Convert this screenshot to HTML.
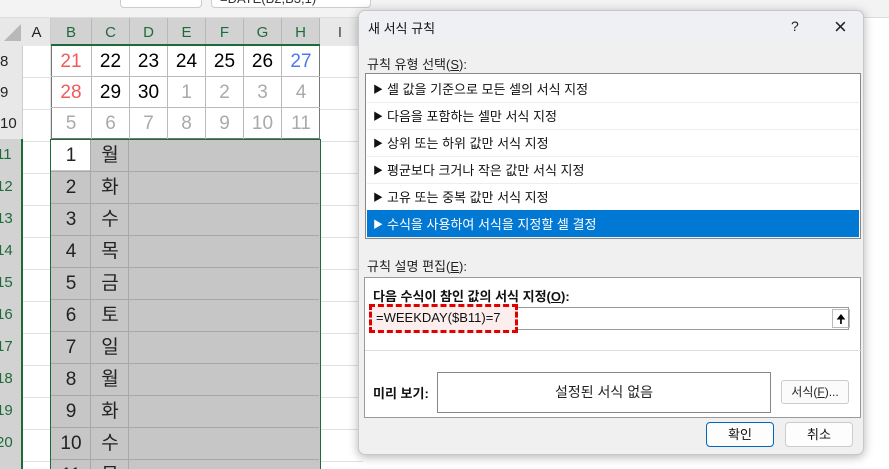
<!DOCTYPE html><html><head><meta charset="utf-8"><style>
html,body{margin:0;width:889px;height:469px;overflow:hidden}
body{background:#fff;font-family:"Liberation Sans","Noto Sans CJK KR",sans-serif;position:relative}
.a{position:absolute;box-sizing:border-box}
.c{position:absolute;box-sizing:border-box;display:flex;align-items:center;justify-content:center;font-size:19px}
.hd{background:#d2d2d2;color:#1e6b3a;font-size:15px;border-right:1px solid #b8b8b8}
.it{position:absolute;left:1px;right:1px;height:27px;font-size:13px;display:flex;align-items:center;padding-left:6px;border-bottom:1px solid #eee;color:#111}
.it b{font-size:10px;font-weight:normal;margin-right:4px}
</style></head><body>
<div class="a" style="left:0;top:0;width:889px;height:18px;background:#f3f3f3;border-bottom:1px solid #ddd"></div>
<div class="a" style="left:120px;top:-4px;width:82px;height:12px;background:#fff;border:1px solid #ccc;border-radius:4px"></div>
<div class="a" style="left:211px;top:-4px;width:160px;height:12px;background:#fff;border:1px solid #ccc;border-radius:4px;font-size:13px;line-height:4px;padding-left:8px;color:#333">=DATE(B2,B3,1)</div>
<div class="a" style="left:0;top:18px;width:23px;height:28px;background:#e8e8e8"></div>
<div class="a" style="left:4px;top:24px;width:0;height:0;border-left:17px solid transparent;border-bottom:17px solid #b8b8b8"></div>
<div class="c" style="left:23px;top:18px;width:28px;height:28px;background:#e8e8e8;font-size:15px;color:#222;border-right:1px solid #ccc">A</div>
<div class="c hd" style="left:51px;top:18px;width:41px;height:28px">B</div>
<div class="c hd" style="left:92px;top:18px;width:38px;height:28px">C</div>
<div class="c hd" style="left:130px;top:18px;width:38px;height:28px">D</div>
<div class="c hd" style="left:168px;top:18px;width:38px;height:28px">E</div>
<div class="c hd" style="left:206px;top:18px;width:38px;height:28px">F</div>
<div class="c hd" style="left:244px;top:18px;width:38px;height:28px">G</div>
<div class="c hd" style="left:282px;top:18px;width:38px;height:28px">H</div>
<div class="c" style="left:320px;top:18px;width:40px;height:28px;background:#e8e8e8;font-size:15px;color:#444">I</div>
<div class="a" style="left:51px;top:44px;width:269px;height:2px;background:#1e6b3a"></div>
<div class="a" style="left:0;top:46px;width:23px;height:423px;background:#e8e8e8;border-right:1px solid #ccc"></div>
<div class="a" style="left:-4px;top:139px;width:25px;font-size:15px;color:#1e6b3a;line-height:32px;background:#d2d2d2;height:330px;padding-left:4px;text-indent:-4px">
<div>11</div><div>12</div><div>13</div><div>14</div><div>15</div><div>16</div><div>17</div><div>18</div><div>19</div><div>20</div></div>
<div class="a" style="left:21px;top:139px;width:2px;height:330px;background:#1e6b3a"></div>
<div class="a" style="left:0;top:46px;width:23px;font-size:15px;color:#222;line-height:31px">
<div>8</div><div>9</div><div>10</div></div>
<div class="a" style="left:23px;top:46px;width:340px;height:423px;background:repeating-linear-gradient(to bottom,transparent 0 31px,#e1e1e1 31px 32px)"></div>
<div class="a" style="left:50px;top:46px;width:1px;height:423px;background:#e1e1e1"></div>
<div class="a" style="left:51px;top:46px;width:269px;height:93px;background:#fff;border:1.5px solid #777;border-top:none"></div>
<div class="a" style="left:51px;top:46px;width:269px;height:93px;display:grid;grid-template-columns:41px repeat(6,38px);grid-template-rows:31px 31px 31px;font-size:19px;text-align:center;line-height:31px">
<div style="color:#f05a5a;border-right:1px solid #bbb;border-bottom:1px solid #bbb">21</div><div style="border-right:1px solid #bbb;border-bottom:1px solid #bbb">22</div><div style="border-right:1px solid #bbb;border-bottom:1px solid #bbb">23</div><div style="border-right:1px solid #bbb;border-bottom:1px solid #bbb">24</div><div style="border-right:1px solid #bbb;border-bottom:1px solid #bbb">25</div><div style="border-right:1px solid #bbb;border-bottom:1px solid #bbb">26</div><div style="color:#4a78f0;border-bottom:1px solid #bbb">27</div>
<div style="color:#f05a5a;border-right:1px solid #bbb;border-bottom:1px solid #bbb">28</div><div style="border-right:1px solid #bbb;border-bottom:1px solid #bbb">29</div><div style="border-right:1px solid #bbb;border-bottom:1px solid #bbb">30</div><div style="color:#aaa;border-right:1px solid #bbb;border-bottom:1px solid #bbb">1</div><div style="color:#aaa;border-right:1px solid #bbb;border-bottom:1px solid #bbb">2</div><div style="color:#aaa;border-right:1px solid #bbb;border-bottom:1px solid #bbb">3</div><div style="color:#aaa;border-bottom:1px solid #bbb">4</div>
<div style="color:#aaa;border-right:1px solid #bbb">5</div><div style="color:#aaa;border-right:1px solid #bbb">6</div><div style="color:#aaa;border-right:1px solid #bbb">7</div><div style="color:#aaa;border-right:1px solid #bbb">8</div><div style="color:#aaa;border-right:1px solid #bbb">9</div><div style="color:#aaa;border-right:1px solid #bbb">10</div><div style="color:#aaa">11</div>
</div>
<div class="a" style="left:50px;top:139px;width:271px;height:330px;background:#c6c6c6;border:1.5px solid #1e6b3a;border-bottom:none;overflow:hidden">
<div class="a" style="left:0;top:0;width:40px;height:30px;background:#fff"></div>
<div class="a" style="left:0;top:0;width:268px;height:330px;background:repeating-linear-gradient(to bottom,transparent 0 31px,#a8a8a8 31px 32px)"></div>
<div class="a" style="left:39px;top:0;width:1px;height:330px;background:#a8a8a8"></div>
<div class="a" style="left:77px;top:0;width:1px;height:330px;background:#a8a8a8"></div>
<div class="a" style="left:0;top:0;width:78px;font-size:19px;line-height:32px;display:grid;grid-template-columns:40px 38px;text-align:center;color:#222">
<div>1</div><div>월</div><div>2</div><div>화</div><div>3</div><div>수</div><div>4</div><div>목</div><div>5</div><div>금</div><div>6</div><div>토</div><div>7</div><div>일</div><div>8</div><div>월</div><div>9</div><div>화</div><div>10</div><div>수</div><div>11</div><div>목</div></div>
</div>
<div class="a" style="left:358px;top:10px;width:506px;height:445px;background:#f0f0f0;border:1px solid #c8c8c8;border-radius:7px;box-shadow:0 2px 10px rgba(0,0,0,.3);overflow:hidden">
<div class="a" style="left:0;top:0;width:506px;height:30px;background:#eef0f4"></div>
<div class="a" style="left:9px;top:7px;font-size:13px;color:#111">새 서식 규칙</div>
<div class="a" style="left:432px;top:7px;font-size:14px;color:#222">?</div>
<div class="a" style="left:475px;top:3px;font-size:22px;color:#222;font-weight:300">×</div>
<div class="a" style="left:8px;top:43px;font-size:13px;color:#222">규칙 유형 선택(<u>S</u>):</div>
<div class="a" style="left:6px;top:62px;width:496px;height:166px;background:#fff;border:1px solid #888">
<div class="it" style="top:1px"><b>▶</b>셀 값을 기준으로 모든 셀의 서식 지정</div>
<div class="it" style="top:28px"><b>▶</b>다음을 포함하는 셀만 서식 지정</div>
<div class="it" style="top:55px"><b>▶</b>상위 또는 하위 값만 서식 지정</div>
<div class="it" style="top:82px"><b>▶</b>평균보다 크거나 작은 값만 서식 지정</div>
<div class="it" style="top:109px"><b>▶</b>고유 또는 중복 값만 서식 지정</div>
<div class="it" style="top:136px;background:#0078d4;color:#fff;height:27px"><b>▶</b>수식을 사용하여 서식을 지정할 셀 결정</div>
</div>
<div class="a" style="left:8px;top:245px;font-size:13px;color:#222">규칙 설명 편집(<u>E</u>):</div>
<div class="a" style="left:5px;top:266px;width:497px;height:141px;background:#fff;border:1px solid #999">
<div class="a" style="left:8px;top:8px;font-size:13px;font-weight:bold;color:#111">다음 수식이 참인 값의 서식 지정(<u>O</u>):</div>
<div class="a" style="left:7px;top:29px;width:477px;height:23px;border:1px solid #999"></div>
<div class="a" style="left:4px;top:26px;width:149px;height:29px;background:#fdeeee;border:3px dashed #e00000"></div>
<div class="a" style="left:11px;top:32px;font-size:13px;color:#111">=WEEKDAY($B11)=7</div>
<div class="a" style="left:467px;top:31px;width:18px;height:19px;border:1px solid #bbb;font-size:12px;text-align:center;line-height:19px">🠉</div>
<div class="a" style="left:0;top:72px;width:497px;height:1px;background:#ddd"></div>
<div class="a" style="left:8px;top:105px;font-size:13px;font-weight:bold;color:#111">미리 보기:</div>
<div class="a" style="left:72px;top:94px;width:334px;height:41px;border:1px solid #888;text-align:center;line-height:39px;font-size:14px;color:#222">설정된 서식 없음</div>
<div class="a" style="left:416px;top:102px;width:68px;height:24px;border:1px solid #ccc;border-radius:3px;background:#fbfbfb;font-size:12px;text-align:center;line-height:22px;color:#222">서식(<u>F</u>)...</div>
</div>
<div class="a" style="left:347px;top:411px;width:68px;height:25px;border:1px solid #0067c0;border-radius:4px;background:#fdfdfd;font-size:13px;text-align:center;line-height:23px;color:#111">확인</div>
<div class="a" style="left:426px;top:411px;width:68px;height:25px;border:1px solid #ccc;border-radius:4px;background:#fdfdfd;font-size:13px;text-align:center;line-height:23px;color:#111">취소</div>
</div>
</body></html>
